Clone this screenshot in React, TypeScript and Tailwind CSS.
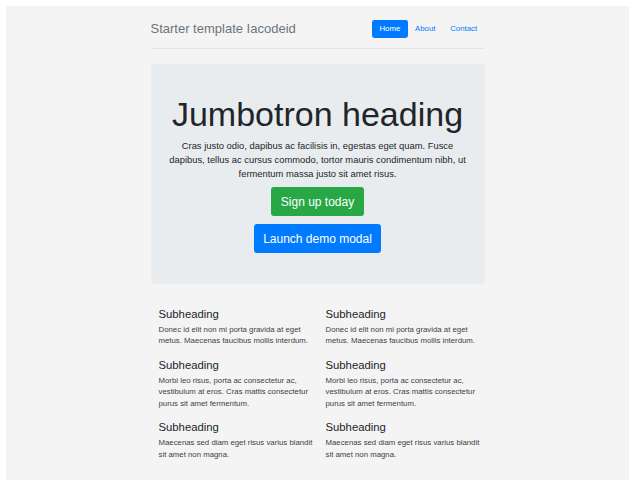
import React from "react";

const sections = [
  ["Donec id elit non mi porta gravida at eget metus. Maecenas faucibus mollis interdum."],
  ["Morbi leo risus, porta ac consectetur ac, vestibulum at eros. Cras mattis consectetur purus sit amet fermentum."],
  ["Maecenas sed diam eget risus varius blandit sit amet non magna."],
];

function Col() {
  return (
    <div className="pl-[8px] pr-[4px]">
      {sections.map((s, i) => (
        <div key={i}>
          <h4 className="text-[11.3px] leading-[13.6px] text-[#212529] mb-[2.5px]">Subheading</h4>
          <p className="text-[7.8px] leading-[11.5px] text-[#3d3f42] mb-[12px]">{s[0]}</p>
        </div>
      ))}
    </div>
  );
}

export default function App() {
  return (
    <div
      className="w-[634px] h-[487px] bg-white pt-[6px] pl-[6px]"
      style={{ fontFamily: '"Liberation Sans", Arial, sans-serif' }}
    >
      <div className="w-[623px] h-[474px] bg-[#f4f4f4]">
        <div className="w-[334px] mx-auto pt-[12px]">
          <header className="flex items-center justify-between h-[22px] mb-[8px]">
            <div className="text-[13px] leading-[16px] text-[#6c757d]">Starter template Iacodeid</div>
            <nav className="flex items-center">
              <span className="bg-[#007bff] text-white text-[7.8px] leading-[11.7px] px-[7.4px] py-[3.4px] rounded-[2.4px]">Home</span>
              <span className="text-[#007bff] text-[7.8px] leading-[11.7px] px-[7.4px] py-[3.4px]">About</span>
              <span className="text-[#007bff] text-[7.8px] leading-[11.7px] px-[7.4px] py-[3.4px]">Contact</span>
            </nav>
          </header>
          <div className="border-b border-[#e5e5e5] mb-[15px]" />
          <div className="bg-[#e9ecef] rounded-[3px] h-[220px] pt-[30px] px-[15px] flex flex-col items-center text-center">
            <h1 className="text-[34px] leading-[40.8px] text-[#212529] mb-[4px]">Jumbotron heading</h1>
            <p className="text-[9.4px] leading-[14.2px] text-[#212529] mb-[6px]">
              Cras justo odio, dapibus ac facilisis in, egestas eget quam. Fusce dapibus, tellus ac cursus commodo, tortor mauris condimentum nibh, ut fermentum massa justo sit amet risus.
            </p>
            <button className="bg-[#28a745] text-white text-[12px] leading-[18px] h-[29px] px-[9.6px] rounded-[3px] mb-[8px]">Sign up today</button>
            <button className="bg-[#007bff] text-white text-[12px] leading-[18px] h-[29px] px-[9.6px] rounded-[3px]">Launch demo modal</button>
          </div>
          <div className="grid grid-cols-2 mt-[23.5px]">
            <Col />
            <Col />
          </div>
        </div>
      </div>
    </div>
  );
}
